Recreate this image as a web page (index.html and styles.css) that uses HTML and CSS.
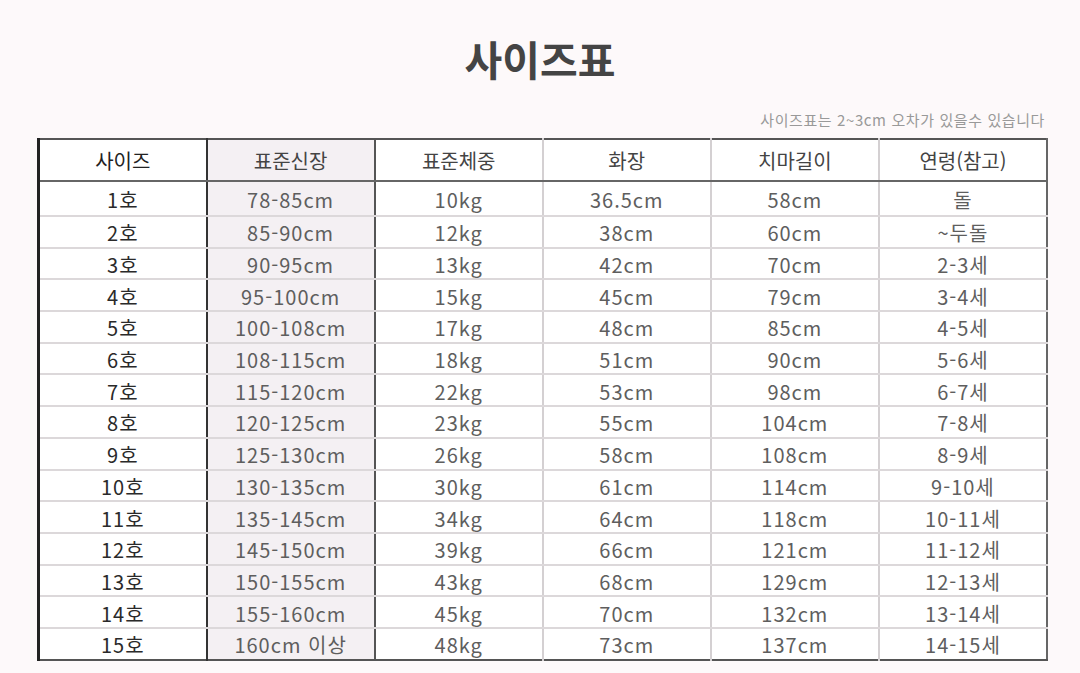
FILE: index.html
```html
<!DOCTYPE html>
<html lang="ko">
<head>
<meta charset="utf-8">
<title>사이즈표</title>
<link rel="stylesheet" href="styles.css">
</head>
<body>
<div class="page">
  <h1 class="title">사이즈표</h1>
  <p class="note">사이즈표는 2~3cm 오차가 있을수 있습니다</p>
  <table class="size-table">
    <thead>
      <tr>
        <th class="c1">사이즈</th>
        <th class="c2">표준신장</th>
        <th class="c3">표준체중</th>
        <th>화장</th>
        <th>치마길이</th>
        <th>연령(참고)</th>
      </tr>
    </thead>
    <tbody>
      <tr class="first"><td class="c1">1호</td><td class="c2">78-85cm</td><td class="c3">10kg</td><td>36.5cm</td><td>58cm</td><td>돌</td></tr>
      <tr><td class="c1">2호</td><td class="c2">85-90cm</td><td class="c3">12kg</td><td>38cm</td><td>60cm</td><td>~두돌</td></tr>
      <tr><td class="c1">3호</td><td class="c2">90-95cm</td><td class="c3">13kg</td><td>42cm</td><td>70cm</td><td>2-3세</td></tr>
      <tr><td class="c1">4호</td><td class="c2">95-100cm</td><td class="c3">15kg</td><td>45cm</td><td>79cm</td><td>3-4세</td></tr>
      <tr><td class="c1">5호</td><td class="c2">100-108cm</td><td class="c3">17kg</td><td>48cm</td><td>85cm</td><td>4-5세</td></tr>
      <tr><td class="c1">6호</td><td class="c2">108-115cm</td><td class="c3">18kg</td><td>51cm</td><td>90cm</td><td>5-6세</td></tr>
      <tr><td class="c1">7호</td><td class="c2">115-120cm</td><td class="c3">22kg</td><td>53cm</td><td>98cm</td><td>6-7세</td></tr>
      <tr><td class="c1">8호</td><td class="c2">120-125cm</td><td class="c3">23kg</td><td>55cm</td><td>104cm</td><td>7-8세</td></tr>
      <tr><td class="c1">9호</td><td class="c2">125-130cm</td><td class="c3">26kg</td><td>58cm</td><td>108cm</td><td>8-9세</td></tr>
      <tr><td class="c1">10호</td><td class="c2">130-135cm</td><td class="c3">30kg</td><td>61cm</td><td>114cm</td><td>9-10세</td></tr>
      <tr><td class="c1">11호</td><td class="c2">135-145cm</td><td class="c3">34kg</td><td>64cm</td><td>118cm</td><td>10-11세</td></tr>
      <tr><td class="c1">12호</td><td class="c2">145-150cm</td><td class="c3">39kg</td><td>66cm</td><td>121cm</td><td>11-12세</td></tr>
      <tr><td class="c1">13호</td><td class="c2">150-155cm</td><td class="c3">43kg</td><td>68cm</td><td>129cm</td><td>12-13세</td></tr>
      <tr><td class="c1">14호</td><td class="c2">155-160cm</td><td class="c3">45kg</td><td>70cm</td><td>132cm</td><td>13-14세</td></tr>
      <tr><td class="c1">15호</td><td class="c2">160cm 이상</td><td class="c3">48kg</td><td>73cm</td><td>137cm</td><td>14-15세</td></tr>
    </tbody>
  </table>
</div>
</body>
</html>
```
FILE: styles.css
```css
html, body {
  margin: 0;
  padding: 0;
}
body {
  background: #fdf9fa;
  font-family: "Noto Sans CJK KR", "Noto Sans", sans-serif;
  color: #555;
}
.page {
  width: 1080px;
  height: 673px;
  padding-top: 30px;
  box-sizing: border-box;
}
.title {
  margin: 0;
  text-align: center;
  font-size: 41px;
  line-height: 56px;
  font-weight: 700;
  color: #444;
}
.note {
  margin: 24px 0 0 0;
  padding-right: 35px;
  text-align: right;
  font-size: 15px;
  line-height: 20px;
  letter-spacing: 0.6px;
  color: #999;
}
.size-table {
  margin: 8px 0 0 37px;
  width: 1011px;
  border-collapse: collapse;
  table-layout: fixed;
  background: #fff;
  border-top: 2px solid #555;
  border-left: 3px solid #222;
  border-right: 2px solid #666;
  border-bottom: 2px solid #555;
}
.size-table th,
.size-table td {
  text-align: center;
  padding: 0;
  border-left: 2px solid #d4d0d2;
  border-bottom: 2px solid #dcd8da;
  font-weight: 400;
}
.size-table th {
  height: 40px;
  font-size: 20px;
  color: #444;
  border-bottom: 2px solid #666;
}
.size-table td {
  height: 27.7px;
  font-size: 20px;
  line-height: 27px;
  padding-top: 2px;
  letter-spacing: 1px;
  color: #5e5e5e;
}
.size-table tr.first td {
  height: 31px;
  padding-top: 2px;
}
.size-table tbody tr:last-child td {
  border-bottom: none;
}
.size-table .c1 {
  color: #2a2a2a;
  border-left: none;
}
.size-table th.c1 {
  color: #222;
}
.size-table .c2 {
  background: #f4f0f3;
  border-left: 2px solid #333;
}
.size-table .c3 {
  border-left: 2px solid #555;
}
```
